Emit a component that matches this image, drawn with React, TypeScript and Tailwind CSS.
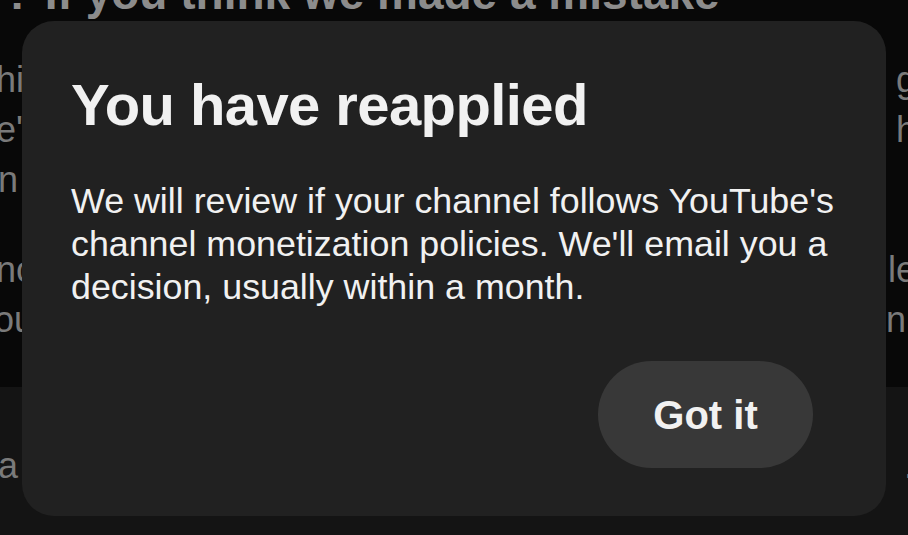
import React from "react";

const FONT = { fontFamily: '"Liberation Sans", Arial, sans-serif' };

// Text lines of the page sitting behind the dialog; only their edges show.
const upperLines = [
  { left: "thi", right: "g", mt: "mt-[41px]", shift: "-ml-[14px]" },
  { left: "he'", right: "h", mt: "mt-0", shift: "-ml-[24px]" },
  { left: "in", right: "", mt: "mt-0", shift: "-ml-[10px]" },
  { left: "nc", right: "le", mt: "mt-[40px]", shift: "-ml-[4px]" },
  { left: "ou", right: "n.", mt: "mt-0", shift: "-ml-[6px]" },
];

function BackdropLine({ left, right, mt, shift }: { left: string; right: string; mt: string; shift: string }) {
  return (
    <div className={`${mt} flex justify-between h-[50px] leading-[50px] text-[36px] text-[#7a7a7a] whitespace-nowrap`}>
      <span className={shift}>{left}</span>
      <span className="-mr-[8px]">{right}</span>
    </div>
  );
}

export default function App() {
  return (
    <div className="relative w-[908px] h-[535px] overflow-hidden bg-[#141414]" style={FONT}>
      {/* page behind the scrim */}
      <div className="flex flex-col h-full">
        <div className="h-[387px] bg-[#080808] overflow-hidden">
          <div className="-mt-[34px] h-[54px] leading-[54px] text-[46px] font-bold text-[#8c8c8c] whitespace-nowrap -ml-[14px]">
            r? If you think we made a mistake
          </div>
          <div className="-mt-[6px]">
            {upperLines.map((l, i) => (
              <BackdropLine key={i} {...l} />
            ))}
          </div>
        </div>
        <div className="flex-1 overflow-hidden">
          <div className="mt-[54px] flex justify-between h-[50px] leading-[50px] text-[36px] text-[#7a7a7a] whitespace-nowrap">
            <span className="-ml-[2px]">a</span>
            <span className="-mr-[6px]">.</span>
          </div>
        </div>
      </div>

      {/* dialog */}
      <div className="absolute left-[22px] top-[21px] w-[864px] h-[495px] rounded-[32px] bg-[#212121] px-[49px] pt-[55px] flex flex-col">
        <h2 className="text-[58px] leading-[58px] font-bold tracking-[-0.6px] text-[#f1f1f1]">
          You have reapplied
        </h2>
        <p className="mt-[46px] text-[35.8px] leading-[43px] text-[#f1f1f1]">
          We will review if your channel follows YouTube's channel monetization policies. We'll email you a
          decision, usually within a month.
        </p>
        <div className="mt-[52px] flex justify-end pr-[24px]">
          <button className="w-[215px] h-[107px] rounded-full bg-[#383838] text-[40px] font-bold text-[#f1f1f1]">
            Got it
          </button>
        </div>
      </div>
    </div>
  );
}
